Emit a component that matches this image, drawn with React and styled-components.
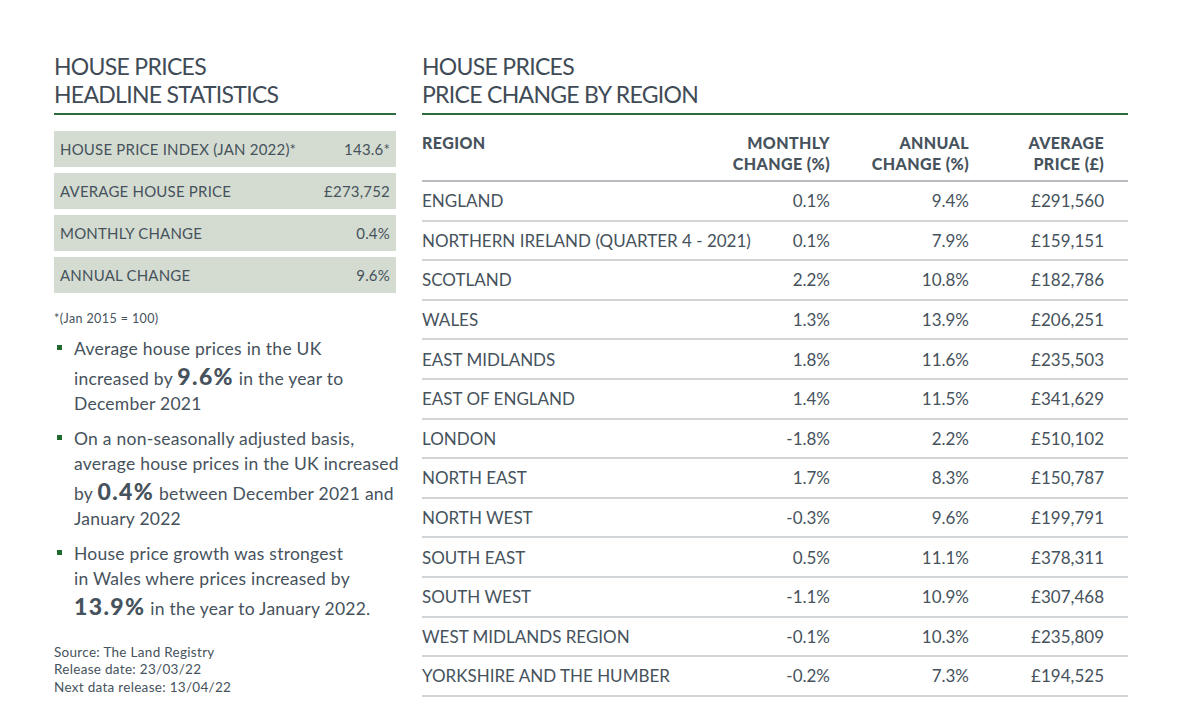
import React from "react";
import styled, { createGlobalStyle } from "styled-components";

const stats = [
  ["HOUSE PRICE INDEX (JAN 2022)*", "143.6*"],
  ["AVERAGE HOUSE PRICE", "£273,752"],
  ["MONTHLY CHANGE", "0.4%"],
  ["ANNUAL CHANGE", "9.6%"],
];

const regions = [
  ["ENGLAND", "0.1%", "9.4%", "£291,560"],
  ["NORTHERN IRELAND (QUARTER 4 - 2021)", "0.1%", "7.9%", "£159,151"],
  ["SCOTLAND", "2.2%", "10.8%", "£182,786"],
  ["WALES", "1.3%", "13.9%", "£206,251"],
  ["EAST MIDLANDS", "1.8%", "11.6%", "£235,503"],
  ["EAST OF ENGLAND", "1.4%", "11.5%", "£341,629"],
  ["LONDON", "-1.8%", "2.2%", "£510,102"],
  ["NORTH EAST", "1.7%", "8.3%", "£150,787"],
  ["NORTH WEST", "-0.3%", "9.6%", "£199,791"],
  ["SOUTH EAST", "0.5%", "11.1%", "£378,311"],
  ["SOUTH WEST", "-1.1%", "10.9%", "£307,468"],
  ["WEST MIDLANDS REGION", "-0.1%", "10.3%", "£235,809"],
  ["YORKSHIRE AND THE HUMBER", "-0.2%", "7.3%", "£194,525"],
];

const App = () => {
  return (
    <Page>
      <GlobalStyle />
      <LeftColumn>
        <Title>
          HOUSE PRICES
          <br />
          HEADLINE STATISTICS
        </Title>
        <Rule />
        <StatList>
          {stats.map(([label, value]) => (
            <StatRow key={label}>
              <span>{label}</span>
              <span>{value}</span>
            </StatRow>
          ))}
        </StatList>
        <Footnote>*(Jan 2015 = 100)</Footnote>
        <Bullets>
          <Bullet>
            Average house prices in the UK
            <br />
            increased by <Big>9.6%</Big> in the year to
            <br />
            December 2021
          </Bullet>
          <Bullet>
            On a non-seasonally adjusted basis,
            <br />
            average house prices in the UK increased
            <br />
            by <Big>0.4%</Big> between December 2021 and
            <br />
            January 2022
          </Bullet>
          <Bullet>
            House price growth was strongest
            <br />
            in Wales where prices increased by
            <br />
            <Big>13.9%</Big> in the year to January 2022.
          </Bullet>
        </Bullets>
        <Source>
          Source: The Land Registry
          <br />
          Release date: 23/03/22
          <br />
          Next data release: 13/04/22
        </Source>
      </LeftColumn>

      <RightColumn>
        <Title>
          HOUSE PRICES
          <br />
          PRICE CHANGE BY REGION
        </Title>
        <Rule />
        <Table>
          <colgroup>
            <col style={{ width: 300 }} />
            <col style={{ width: 108 }} />
            <col style={{ width: 139 }} />
            <col style={{ width: 159 }} />
          </colgroup>
          <thead>
            <tr>
              <Th>REGION</Th>
              <Th $right>
                MONTHLY
                <br />
                CHANGE (%)
              </Th>
              <Th $right>
                ANNUAL
                <br />
                CHANGE (%)
              </Th>
              <Th $right $last>
                AVERAGE
                <br />
                PRICE (£)
              </Th>
            </tr>
          </thead>
          <tbody>
            {regions.map(([name, monthly, annual, avg]) => (
              <tr key={name}>
                <Td>{name}</Td>
                <Td $right>{monthly}</Td>
                <Td $right>{annual}</Td>
                <Td $right $last>
                  {avg}
                </Td>
              </tr>
            ))}
          </tbody>
        </Table>
      </RightColumn>
    </Page>
  );
};

const GlobalStyle = createGlobalStyle`
  body {
    margin: 0;
    background: #ffffff;
    font-family: "Lato", "Liberation Sans", sans-serif;
    color: #46525c;
  }
`;

const Page = styled.div`
  display: flex;
  gap: 26px;
  padding: 52px 0 0 54px;
  width: 1185px;
  height: 716px;
  box-sizing: border-box;
`;

const LeftColumn = styled.div`
  width: 342px;
  display: flex;
  flex-direction: column;
`;

const RightColumn = styled.div`
  width: 706px;
  display: flex;
  flex-direction: column;
`;

const Title = styled.h1`
  margin: 0;
  font-size: 23px;
  font-weight: 400;
  line-height: 28px;
  letter-spacing: -0.7px;
  color: #3f4b56;
`;

const Rule = styled.div`
  height: 2px;
  background: #2d6b3e;
  margin-top: 5px;
`;

const StatList = styled.div`
  display: flex;
  flex-direction: column;
  gap: 6px;
  margin-top: 16px;
`;

const StatRow = styled.div`
  display: flex;
  justify-content: space-between;
  align-items: center;
  height: 36px;
  padding: 0 6px;
  background: #d4dcd1;
  font-size: 15px;
  letter-spacing: 0.2px;
`;

const Footnote = styled.div`
  font-size: 12.5px;
  margin-top: 18px;
  letter-spacing: 0.4px;
`;

const Bullets = styled.ul`
  list-style: none;
  margin: 10px 0 0;
  padding: 0;
  display: flex;
  flex-direction: column;
  gap: 10px;
`;

const Bullet = styled.li`
  position: relative;
  padding-left: 20px;
  font-size: 17.5px;
  line-height: 25px;
  letter-spacing: 0.25px;
  white-space: nowrap;

  &::before {
    content: "";
    position: absolute;
    left: 3px;
    top: 9px;
    width: 5px;
    height: 5px;
    background: #1f6b2f;
  }
`;

const Big = styled.b`
  font-size: 23px;
  font-weight: 900;
  letter-spacing: 1.4px;
  line-height: 30px;
`;

const Source = styled.div`
  margin-top: auto;
  margin-bottom: 20px;
  font-size: 13.5px;
  line-height: 17.5px;
  letter-spacing: 0.3px;
`;

const Table = styled.table`
  border-collapse: collapse;
  table-layout: fixed;
  width: 100%;
  margin-top: 17px;
`;

const Th = styled.th`
  text-align: ${(p) => (p.$right ? "right" : "left")};
  padding: 0 ${(p) => (p.$last ? "24px" : "0")} 6px 0;
  font-size: 16px;
  font-weight: 900;
  line-height: 21px;
  letter-spacing: 0.4px;
  color: #46525c;
  border-bottom: 2px solid #b9bdc1;
  vertical-align: top;
`;

const Td = styled.td`
  text-align: ${(p) => (p.$right ? "right" : "left")};
  padding: 0 ${(p) => (p.$last ? "24px" : "0")} 0 0;
  height: 37.6px;
  font-size: 17px;
  letter-spacing: 0;
  white-space: nowrap;
  border-bottom: 2px solid #d2d5d8;
  vertical-align: middle;
`;

export default App;
